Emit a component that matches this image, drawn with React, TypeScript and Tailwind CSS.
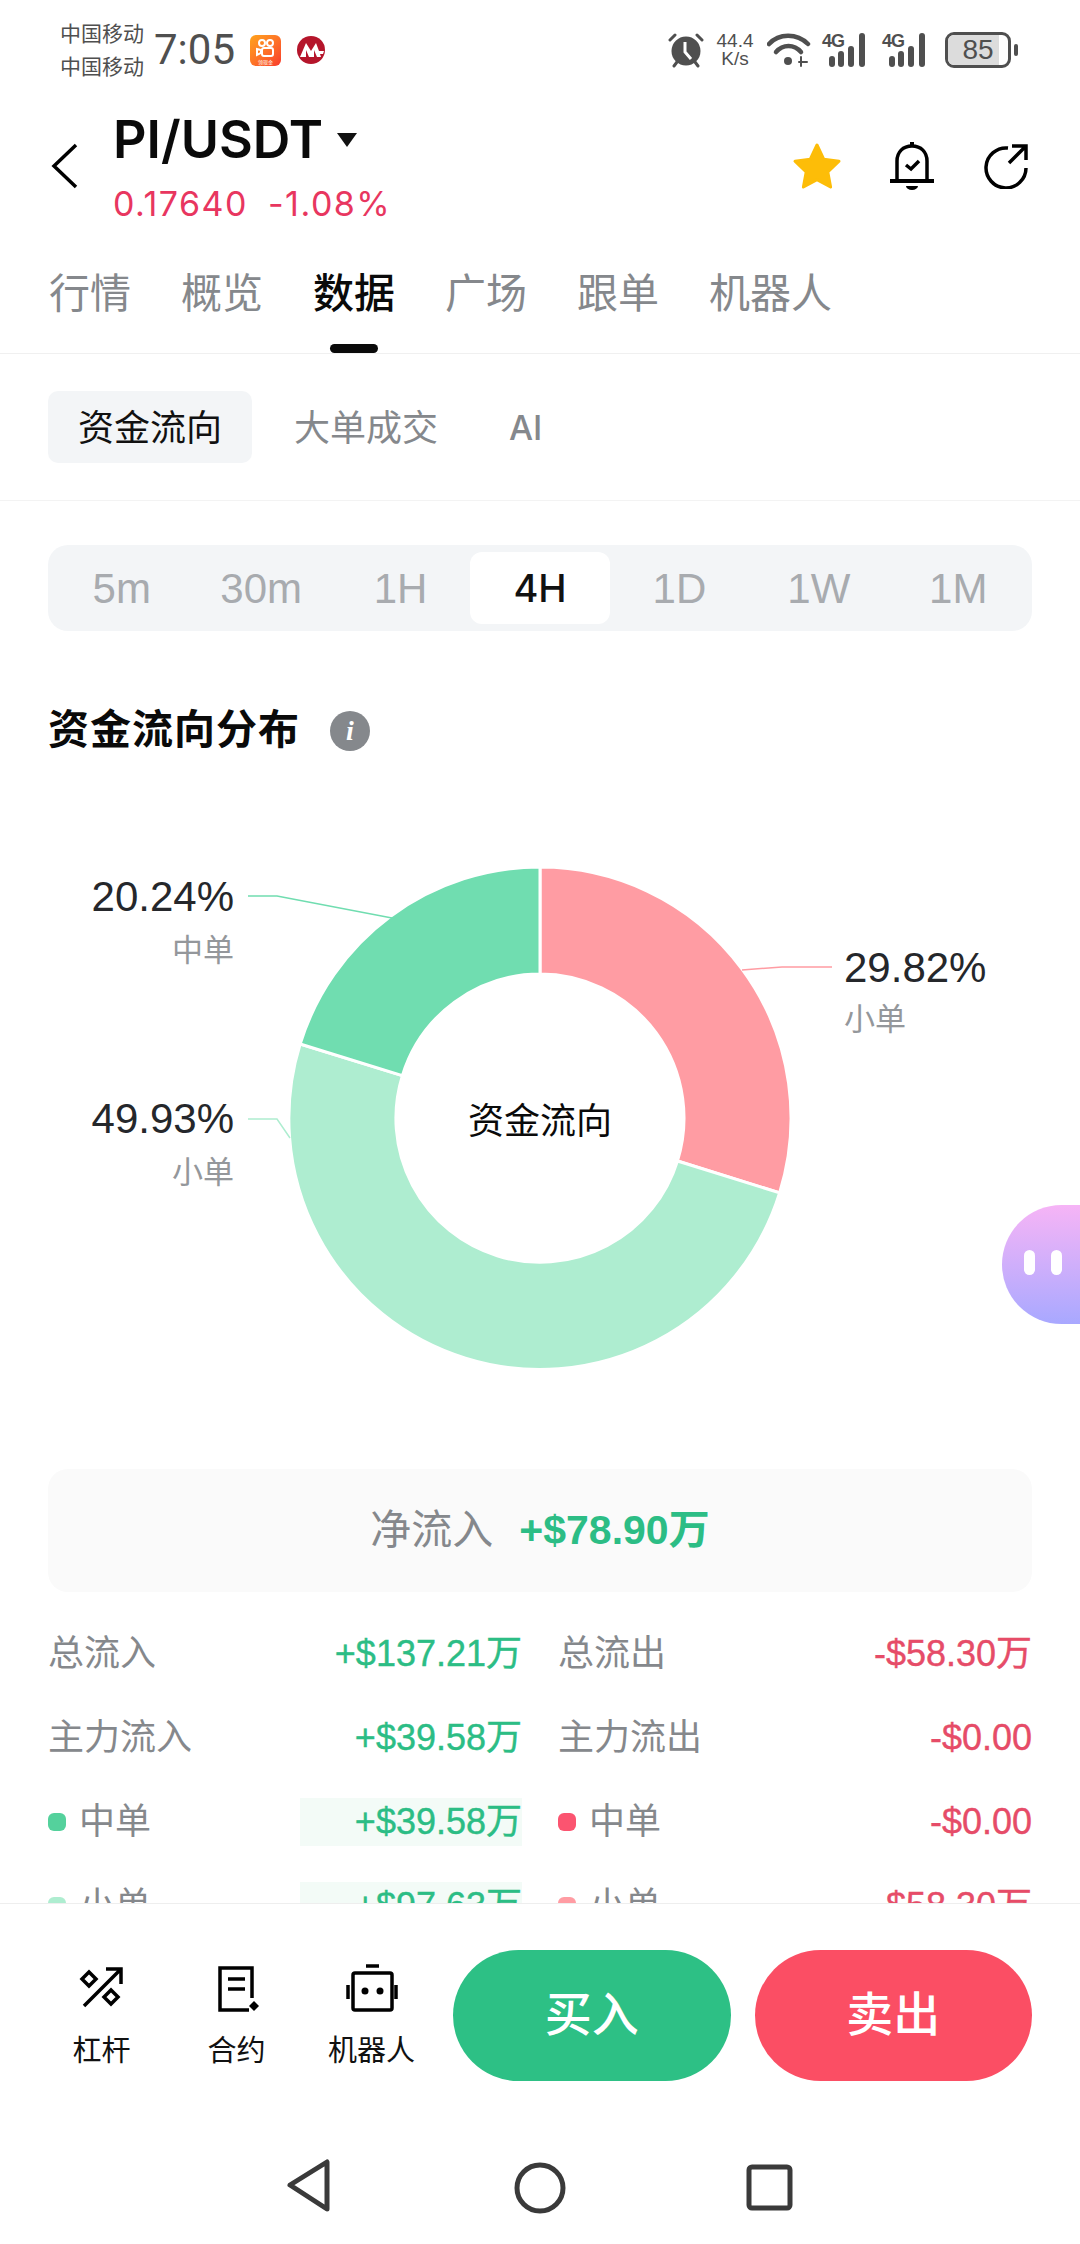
const tabs = ["行情", "概览", "数据", "广场", "跟单", "机器人"];
const ranges = ["5m", "30m", "1H", "4H", "1D", "1W", "1M"];

type Row = {
  left: string;
  leftValue: string;
  right: string;
  rightValue: string;
  leftDot?: string;
  rightDot?: string;
  highlight?: boolean;
};

const rows: Row[] = [
  { left: "总流入", leftValue: "+$137.21万", right: "总流出", rightValue: "-$58.30万" },
  { left: "主力流入", leftValue: "+$39.58万", right: "主力流出", rightValue: "-$0.00" },
  { left: "中单", leftValue: "+$39.58万", right: "中单", rightValue: "-$0.00", leftDot: "bg-[#54d19c]", rightDot: "bg-[#fb5470]", highlight: true },
  { left: "小单", leftValue: "+$97.63万", right: "小单", rightValue: "-$58.30万", leftDot: "bg-[#aeedd0]", rightDot: "bg-[#ff9ca3]", highlight: true },
];

function arc(start: number, end: number) {
  const R = 251;
  const r = 144;
  const pt = (rad: number, a: number) => {
    const t = (a / 100) * 2 * Math.PI;
    return `${(260 + rad * Math.sin(t)).toFixed(2)} ${(260 - rad * Math.cos(t)).toFixed(2)}`;
  };
  const large = end - start > 50 ? 1 : 0;
  return `M${pt(R, start)} A${R} ${R} 0 ${large} 1 ${pt(R, end)} L${pt(r, end)} A${r} ${r} 0 ${large} 0 ${pt(r, start)} Z`;
}

function Signal() {
  return (
    <div className="relative h-[36px] w-[49px]">
      <span className="absolute left-0 top-0 text-[18px] font-bold leading-[19px] tracking-[-1px] text-[#4f4f4f]">4G</span>
      <svg viewBox="0 0 49 36" className="absolute inset-0 h-full w-full" fill="#4f4f4f">
        <rect x="7" y="24" width="6" height="11" rx="3" />
        <rect x="16" y="19" width="6" height="16" rx="3" />
        <rect x="26" y="14" width="6" height="21" rx="3" />
        <rect x="37" y="1" width="6" height="34" rx="3" />
      </svg>
    </div>
  );
}

function StatusBar() {
  return (
    <div className="flex h-[90px] shrink-0 items-center pl-[60px] pr-[62px] pt-[10px] text-[#4f4f4f]">
      <div className="flex w-[90px] flex-col text-[21px] leading-[33px]">
        <span>中国移动</span>
        <span>中国移动</span>
      </div>
      <span className="ml-[4px] font-['Roboto'] text-[42px] leading-none">7:05</span>
      <div className="relative ml-[15px] flex h-[31px] w-[31px] items-start justify-center overflow-hidden rounded-[6px] bg-gradient-to-br from-[#ffa31a] to-[#f8362c]">
        <svg viewBox="0 0 30 30" className="h-[30px] w-[30px]" fill="none" stroke="#fff" strokeWidth="2">
          <circle cx="11" cy="8" r="3" />
          <circle cx="19" cy="8" r="3" />
          <rect x="11" y="13" width="11" height="8" rx="2" />
          <path d="M10 15l-4-1v6l4-2z" />
        </svg>
        <span className="absolute bottom-0 left-0 right-0 text-center text-[5px] leading-[7px] text-white">领现金</span>
      </div>
      <svg viewBox="0 0 28 28" className="ml-[16px] h-[28px] w-[28px]">
        <circle cx="14" cy="14" r="14" fill="#b5152b" />
        <path d="M3 21 9 7l5 8 5-8 3 8h5l-1 3h-3l1 3z" fill="#fff" />
        <path d="M9 21v-7l3 7zM17 21v-7l3 7z" fill="#b5152b" />
      </svg>
      <div className="flex-1" />
      <svg viewBox="0 0 36 36" className="h-[36px] w-[36px]" fill="#4f4f4f">
        <circle cx="18" cy="19" r="14.5" />
        <path d="M17 10v10l6 7" fill="none" stroke="#fff" strokeWidth="3" />
        <path d="M2 8l5-5M34 8l-5-5M6 34l3-4M30 34l-3-4" fill="none" stroke="#4f4f4f" strokeWidth="3" strokeLinecap="round" />
      </svg>
      <div className="ml-[10px] flex w-[42px] flex-col items-center text-[19px] leading-[18px]">
        <span>44.4</span>
        <span>K/s</span>
      </div>
      <svg viewBox="0 0 44 36" className="ml-[11px] h-[36px] w-[44px]" fill="none" stroke="#4f4f4f" strokeWidth="4.5" strokeLinecap="round">
        <path d="M2 12C12 1 30 1 41 12" />
        <path d="M9 20C16 12 27 12 34 20" />
        <circle cx="21" cy="29" r="4" fill="#4f4f4f" stroke="none" />
        <path d="M34 25v9M40 30h-8" strokeWidth="2" />
      </svg>
      <div className="ml-[11px]">
        <Signal />
      </div>
      <div className="ml-[11px]">
        <Signal />
      </div>
      <div className="relative ml-[14px] flex h-[36px] w-[66px] items-center justify-center overflow-hidden rounded-[9px] border-[3px] border-[#4f4f4f] text-[28px] leading-none">
        <div className="absolute inset-y-0 left-0 w-[85%] bg-[#dcdcdc]" />
        <span className="relative">85</span>
      </div>
      <div className="ml-[3px] h-[12px] w-[4px] rounded-[2px] bg-[#4f4f4f]" />
    </div>
  );
}

function Header() {
  return (
    <div className="flex h-[152px] shrink-0 items-center pl-[50px] pr-[52px]">
      <svg viewBox="0 0 30 46" className="h-[46px] w-[30px]" fill="none" stroke="#000" strokeWidth="3.500">
        <path d="M26 2L4 23l22 21" />
      </svg>
      <div className="ml-[33px] flex flex-col font-['Inter','Noto_Sans_CJK_SC',sans-serif]">
        <div className="flex items-center">
          <span className="text-[52px] font-semibold leading-[60px] text-[#0a0a0a]">PI/USDT</span>
          <svg viewBox="0 0 20 14" className="ml-[14px] h-[14px] w-[20px]" fill="#111">
            <path d="M0 0h20L10 14z" />
          </svg>
        </div>
        <div className="mt-[16px] flex gap-[20px] text-[34px] leading-[36px] tracking-[1.5px] text-[#e8365f]">
          <span>0.17640</span>
          <span>-1.08%</span>
        </div>
      </div>
      <div className="flex-1" />
      <svg viewBox="0 0 50 48" className="h-[48px] w-[50px]" fill="#fdbd08" stroke="#fdbd08" strokeWidth="3" strokeLinejoin="round">
        <path d="M25 3l6.7 14.2 15.3 2-11.2 10.700 2.800 15.100L25 37.600l-13.600 7.400 2.800-15.100L3 19.200l15.300-2z" />
      </svg>
      <svg viewBox="0 0 46 50" className="ml-[47px] h-[50px] w-[46px]" fill="none" stroke="#000" strokeWidth="3.500">
        <path d="M8 39V20C8 11 14 5 23 5s15 6 15 15v19" />
        <path d="M1 40h44" strokeWidth="4" />
        <path d="M23 1v3" strokeWidth="4" />
        <path d="M17 45a6 4 0 0 0 12 0z" fill="#000" stroke="none" />
        <path d="M17 24l5 4 8-8" strokeWidth="3.500" />
      </svg>
      <svg viewBox="0 0 44 46" className="ml-[49px] h-[46px] w-[44px]" fill="none" stroke="#000" strokeWidth="3.500">
        <path d="M24 5A20 20 0 1 0 42 25" />
        <path d="M25 20L41 4M28 3h14v14" />
      </svg>
    </div>
  );
}

function Tabs() {
  return (
    <div className="flex h-[112px] shrink-0 items-start gap-[50px] border-b border-[#f0f0f0] pl-[49px] pt-[24px]">
      {tabs.map((t) => (
        <div key={t} className="relative text-[41px] leading-[56px]">
          <span className={t === "数据" ? "font-medium text-[#0a0a0a]" : "text-[#85888c]"}>{t}</span>
          {t === "数据" && (
            <div className="absolute left-1/2 top-[78px] h-[9px] w-[48px] -translate-x-1/2 rounded-full bg-[#0a0a0a]" />
          )}
        </div>
      ))}
    </div>
  );
}

function SubTabs() {
  return (
    <div className="flex h-[147px] shrink-0 items-center border-b border-[#f3f3f3] pl-[48px] text-[36px]">
      <div className="flex h-[72px] w-[204px] items-center justify-center rounded-[10px] bg-[#f3f5f7] pt-[3px] text-[#111]">资金流向</div>
      <div className="ml-[42px] pt-[3px] text-[#85888c]">大单成交</div>
      <div className="ml-[71px] font-['Inter'] text-[34px] font-medium text-[#85888c]">AI</div>
    </div>
  );
}

function RangePicker() {
  return (
    <div className="mx-[48px] mt-[44px] grid h-[86px] grid-cols-7 items-center rounded-[20px] bg-[#f3f5f7] px-[4px]">
      {ranges.map((r) => (
        <div
          key={r}
          className={
            r === "4H"
              ? "flex h-[72px] items-center justify-center rounded-[12px] bg-white font-['Inter'] text-[38px] font-medium text-[#111]"
              : "flex h-[72px] items-center justify-center text-[42px] text-[#a8abaf]"
          }
        >
          {r}
        </div>
      ))}
    </div>
  );
}

function Donut() {
  return (
    <div className="relative mx-auto mt-[104px] h-[520px] w-[1080px]">
      <svg viewBox="0 0 520 520" className="absolute left-[280px] top-0 h-[520px] w-[520px]">
        <path d={arc(0, 29.82)} fill="#ff9ca3" stroke="#fff" strokeWidth="3" />
        <path d={arc(29.82, 79.76)} fill="#aeedd0" stroke="#fff" strokeWidth="3" />
        <path d={arc(79.76, 100)} fill="#70ddb0" stroke="#fff" strokeWidth="3" />
      </svg>
      <svg viewBox="0 0 1080 520" className="absolute inset-0 h-full w-full" fill="none" strokeWidth="1.500">
        <path d="M248 38h29l115 22" stroke="#70ddb0" />
        <path d="M248 261h29l13 19" stroke="#aeedd0" />
        <path d="M742 112l40-3h50" stroke="#ff9ca3" />
      </svg>
      <div className="absolute left-[468px] top-[239px] w-[144px] text-center text-[36px] leading-[50px] text-[#0a0a0a]">资金流向</div>

      <div className="absolute right-[846px] top-[14px] flex flex-col items-end">
        <span className="text-[42px] leading-[50px] text-[#25272b]">20.24%</span>
        <span className="mt-[7px] text-[31px] leading-[44px] text-[#94979b]">中单</span>
      </div>
      <div className="absolute right-[846px] top-[236px] flex flex-col items-end">
        <span className="text-[42px] leading-[50px] text-[#25272b]">49.93%</span>
        <span className="mt-[7px] text-[31px] leading-[44px] text-[#94979b]">小单</span>
      </div>
      <div className="absolute left-[844px] top-[85px] flex flex-col items-start">
        <span className="text-[42px] leading-[50px] text-[#25272b]">29.82%</span>
        <span className="mt-[5px] text-[31px] leading-[44px] text-[#94979b]">小单</span>
      </div>
    </div>
  );
}

function FlowRow({ row }: { row: Row }) {
  return (
    <div className="grid h-[84px] grid-cols-[474px_474px] items-center justify-between text-[36px]">
      <div className="flex items-center">
        {row.leftDot && <span className={`mr-[13px] h-[18px] w-[18px] rounded-[6px] ${row.leftDot}`} />}
        <span className="text-[#85888c]">{row.left}</span>
        <span
          className={
            row.highlight
              ? "ml-auto flex h-[48px] w-[222px] items-center justify-end bg-[#f3fbf7] text-[#2cbd85] [-webkit-text-stroke:0.4px]"
              : "ml-auto text-[#2cbd85] [-webkit-text-stroke:0.4px]"
          }
        >
          {row.leftValue}
        </span>
      </div>
      <div className="flex items-center">
        {row.rightDot && <span className={`mr-[13px] h-[18px] w-[18px] rounded-[6px] ${row.rightDot}`} />}
        <span className="text-[#85888c]">{row.right}</span>
        <span className="ml-auto text-[#e64c68] [-webkit-text-stroke:0.4px]">{row.rightValue}</span>
      </div>
    </div>
  );
}

function ToolItem({ label, children }: { label: string; children: React.ReactNode }) {
  return (
    <div className="flex w-[135px] flex-col items-center">
      {children}
      <span className="mt-[21px] text-[29px] leading-[36px] text-[#111]">{label}</span>
    </div>
  );
}

function Toolbar() {
  return (
    <div className="flex h-[178px] shrink-0 border-t border-[#eeeeee] bg-white pl-[34px] pr-[48px] pt-[46px]">
      <div className="flex items-start pt-[14px]">
        <ToolItem label="杠杆">
          <svg viewBox="0 0 48 48" className="h-[48px] w-[48px]" fill="none" stroke="#000" strokeWidth="3.500">
            <path d="M6 42L42 6M28 5h15v15" />
            <path d="M11 8l7 7-7 7-7-7zM33 26l7 7-7 7-7-7z" />
          </svg>
        </ToolItem>
        <ToolItem label="合约">
          <svg viewBox="0 0 48 48" className="h-[48px] w-[48px]" fill="none" stroke="#000" strokeWidth="3.500">
            <path d="M39 34V4H7v42h29" />
            <path d="M15 15h17M15 25h17" />
            <path d="M41 37l5 5-5 5-5-5z" fill="#000" stroke="none" />
          </svg>
        </ToolItem>
        <ToolItem label="机器人">
          <svg viewBox="0 0 52 48" className="h-[48px] w-[52px]" fill="none" stroke="#000" strokeWidth="3.500">
            <path d="M20 2h13" />
            <rect x="7" y="9" width="39" height="37" rx="2" />
            <path d="M2 21v14M50 21v14" />
            <circle cx="19" cy="27" r="3.500" fill="#000" stroke="none" />
            <circle cx="34" cy="27" r="3.500" fill="#000" stroke="none" />
          </svg>
        </ToolItem>
      </div>
      <div className="ml-[14px] flex flex-1 gap-[24px]">
        <div className="flex h-[131px] flex-1 items-center justify-center rounded-full bg-[#2dc085] text-[47px] font-medium text-white">买入</div>
        <div className="flex h-[131px] flex-1 items-center justify-center rounded-full bg-[#fb4e64] text-[47px] font-medium text-white">卖出</div>
      </div>
    </div>
  );
}

function NavBar() {
  return (
    <div className="flex h-[163px] shrink-0 items-start justify-center bg-white pt-[74px]">
      <svg viewBox="0 0 600 60" className="h-[60px] w-[600px]" fill="none" stroke="#3a3a3a" strokeWidth="5" strokeLinejoin="round">
        <path d="M50 30l37-23v47z" />
        <circle cx="300" cy="33" r="23" />
        <rect x="509" y="12" width="41" height="41" rx="3" />
      </svg>
    </div>
  );
}

export default function App() {
  return (
    <div className="relative flex h-[2244px] w-[1080px] flex-col overflow-hidden bg-white font-['Liberation_Sans','Noto_Sans_CJK_SC',sans-serif]">
      <StatusBar />
      <Header />
      <Tabs />
      <SubTabs />
      <div className="min-h-0 flex-1 overflow-hidden">
        <RangePicker />
        <div className="mx-[48px] mt-[77px] flex h-[46px] items-center">
          <span className="text-[41px] font-bold tracking-[1px] text-[#0a0a0a]">资金流向分布</span>
          <span className="ml-[30px] flex h-[40px] w-[40px] items-center justify-center rounded-full bg-[#85888c] font-['Liberation_Serif'] text-[28px] font-bold italic text-white">i</span>
        </div>
        <Donut />
        <div className="mx-[48px] mt-[91px] flex h-[123px] items-center justify-center rounded-[20px] bg-[#fafafa] text-[41px]">
          <span className="text-[#85888c]">净流入</span>
          <span className="ml-[26px] font-bold text-[#2cbd85]">+$78.90万</span>
        </div>
        <div className="mx-[48px] mt-[20px]">
          {rows.map((r) => (
            <FlowRow key={r.left} row={r} />
          ))}
        </div>
      </div>
      <Toolbar />
      <NavBar />
      <div className="absolute right-0 top-[1205px] h-[119px] w-[78px] rounded-l-[60px] bg-gradient-to-b from-[#f6b4f6] to-[#a8a8ff]">
        <div className="absolute left-[22px] top-[45px] h-[25px] w-[11px] rounded-full bg-white" />
        <div className="absolute left-[49px] top-[45px] h-[25px] w-[11px] rounded-full bg-white" />
      </div>
    </div>
  );
}
